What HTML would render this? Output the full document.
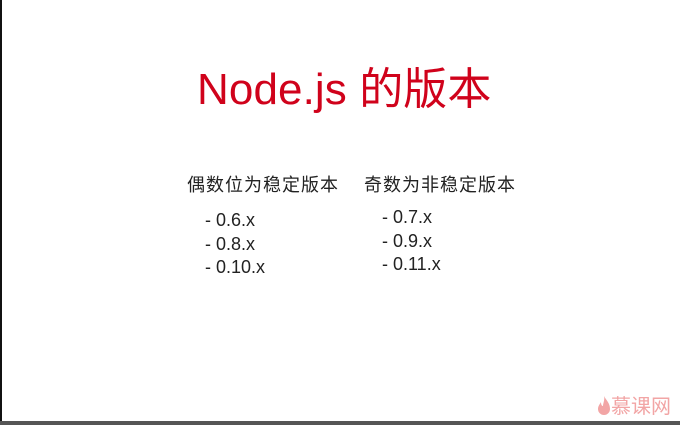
<!DOCTYPE html>
<html><head><meta charset="utf-8"><style>
html,body{margin:0;padding:0}
body{width:680px;height:425px;position:relative;overflow:hidden;background:#fff;font-family:"Liberation Sans","Noto Sans CJK SC",sans-serif}
.lb{position:absolute;left:0;top:0;width:2px;height:425px;background:#111}
.bb{position:absolute;left:0;top:421px;width:680px;height:4px;background:#555}
.t{position:absolute;left:197px;top:63px;font-size:44px;color:#d0021b;white-space:nowrap;line-height:54px;letter-spacing:0.1px}
.h{position:absolute;font-size:18px;color:#222;line-height:20px;letter-spacing:1px;white-space:nowrap}
.l{position:absolute;font-size:18px;color:#222;line-height:23.5px;white-space:pre}
.logo{position:absolute;left:597px;top:395px;font-size:20px;color:#f2a5a5;line-height:24px;white-space:nowrap}
</style></head><body>
<div class="lb"></div>
<div class="t">Node.js 的版本</div>
<div class="h" style="left:187px;top:175px">偶数位为稳定版本</div>
<div class="h" style="left:364px;top:175px">奇数为非稳定版本</div>
<div class="l" style="left:205px;top:209px">- 0.6.x<br>- 0.8.x<br>- 0.10.x</div>
<div class="l" style="left:382px;top:206px">- 0.7.x<br>- 0.9.x<br>- 0.11.x</div>
<div class="logo"><svg width="14" height="22" viewBox="0 0 14 22" style="vertical-align:-4px"><path d="M7 1C9 5 13 8 13 14a6 6 0 0 1-12 0c0-3 2-5 3-7 0 3 1 4 2 4C6 8 8 5 7 1z" fill="#f2a5a5"/></svg>慕课网</div>
<div class="bb"></div>
</body></html>
